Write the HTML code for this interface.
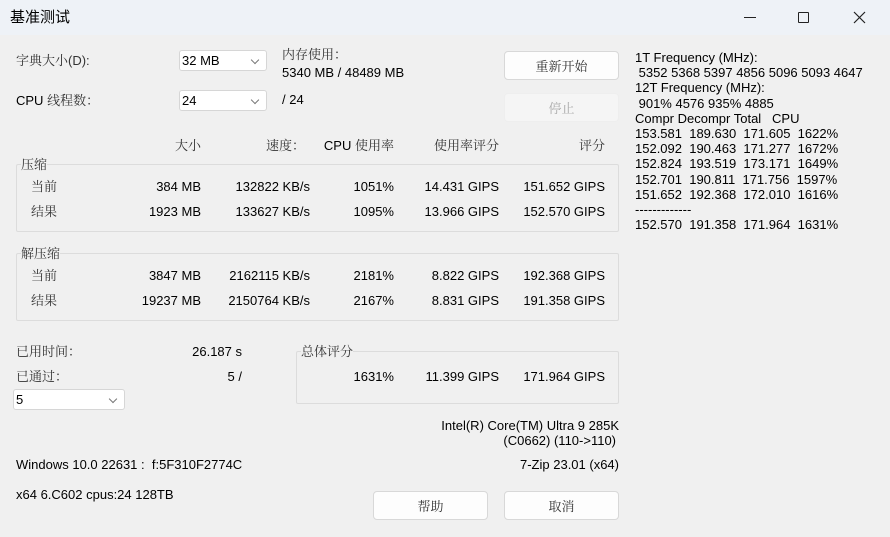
<!DOCTYPE html><html><head><meta charset="utf-8"><style>
*{margin:0;padding:0;box-sizing:border-box}
body{width:890px;height:537px;background:#f0f0f0;font-family:"Liberation Sans","Noto Sans CJK SC",sans-serif;font-size:13px;color:#000;position:relative;overflow:hidden}
.t{position:absolute;line-height:16px;white-space:nowrap}
.r{position:absolute;line-height:16px;white-space:nowrap;text-align:right}
.cj{font-family:"Noto Serif CJK SC","Noto Sans CJK SC",serif;color:#333}
.box{position:absolute;border:1px solid #dcdcdc;border-radius:2px}
.sel{position:absolute;background:#fff;border:1px solid #d6d6d6;border-radius:3px;height:21px;padding-left:2px;line-height:19px}
.sel:after{content:"";position:absolute;right:8px;top:6px;width:5px;height:5px;border-right:1px solid #777;border-bottom:1px solid #777;transform:rotate(45deg)}
.btn{position:absolute;background:#fdfdfd;border:1px solid #d8d8d8;border-radius:4px;text-align:center;font-family:"Noto Serif CJK SC",serif;color:#333}
</style></head><body>
<div style="position:absolute;left:0;top:0;width:890px;height:35px;background:#eef2f7"></div>
<div class="t" style="left:10px;top:9px;font-size:15px;font-family:'Noto Sans CJK SC',sans-serif">基准测试</div>
<div style="position:absolute;left:744px;top:17px;width:12px;height:1px;background:#222"></div>
<div style="position:absolute;left:798px;top:12px;width:11px;height:11px;border:1px solid #222;border-radius:1px"></div>
<svg style="position:absolute;left:853px;top:11px" width="13" height="13"><path d="M1 1L12 12M12 1L1 12" stroke="#222" stroke-width="1.2"/></svg>

<div class="t cj" style="left:16px;top:52px">字典大小<span style="font-family:'Liberation Sans'">(D):</span></div>
<div class="sel" style="left:179px;top:50px;width:88px">32 MB</div>
<div class="t cj" style="left:282px;top:46px">内存使用：</div>
<div class="t" style="left:282px;top:65px">5340 MB / 48489 MB</div>
<div class="t" style="left:16px;top:92px">CPU <span class="cj">线程数：</span></div>
<div class="sel" style="left:179px;top:90px;width:88px">24</div>
<div class="t" style="left:282px;top:92px">/ 24</div>
<div class="btn" style="left:504px;top:51px;width:115px;height:29px;line-height:27px">重新开始</div>
<div class="btn" style="left:504px;top:93px;width:115px;height:29px;line-height:27px;background:#f5f5f5;border-color:#eee;color:#aaa">停止</div>

<div class="r cj" style="left:100px;width:101px;top:137px">大小</div>
<div class="r cj" style="left:200px;width:105px;top:137px">速度：</div>
<div class="r" style="left:300px;width:94px;top:137px">CPU <span class="cj">使用率</span></div>
<div class="r cj" style="left:400px;width:99px;top:137px">使用率评分</div>
<div class="r cj" style="left:500px;width:105px;top:137px">评分</div>

<div class="box" style="left:16px;top:164px;width:603px;height:68px"></div>
<div class="t cj" style="left:21px;top:156px;background:#f0f0f0">压缩</div>
<div class="t cj" style="left:31px;top:178px">当前</div>
<div class="r" style="left:100px;width:101px;top:179px">384 MB</div>
<div class="r" style="left:200px;width:110px;top:179px">132822 KB/s</div>
<div class="r" style="left:300px;width:94px;top:179px">1051%</div>
<div class="r" style="left:400px;width:99px;top:179px">14.431 GIPS</div>
<div class="r" style="left:500px;width:105px;top:179px">151.652 GIPS</div>
<div class="t cj" style="left:31px;top:203px">结果</div>
<div class="r" style="left:100px;width:101px;top:204px">1923 MB</div>
<div class="r" style="left:200px;width:110px;top:204px">133627 KB/s</div>
<div class="r" style="left:300px;width:94px;top:204px">1095%</div>
<div class="r" style="left:400px;width:99px;top:204px">13.966 GIPS</div>
<div class="r" style="left:500px;width:105px;top:204px">152.570 GIPS</div>

<div class="box" style="left:16px;top:253px;width:603px;height:68px"></div>
<div class="t cj" style="left:21px;top:245px;background:#f0f0f0">解压缩</div>
<div class="t cj" style="left:31px;top:267px">当前</div>
<div class="r" style="left:100px;width:101px;top:268px">3847 MB</div>
<div class="r" style="left:200px;width:110px;top:268px">2162115 KB/s</div>
<div class="r" style="left:300px;width:94px;top:268px">2181%</div>
<div class="r" style="left:400px;width:99px;top:268px">8.822 GIPS</div>
<div class="r" style="left:500px;width:105px;top:268px">192.368 GIPS</div>
<div class="t cj" style="left:31px;top:292px">结果</div>
<div class="r" style="left:100px;width:101px;top:293px">19237 MB</div>
<div class="r" style="left:200px;width:110px;top:293px">2150764 KB/s</div>
<div class="r" style="left:300px;width:94px;top:293px">2167%</div>
<div class="r" style="left:400px;width:99px;top:293px">8.831 GIPS</div>
<div class="r" style="left:500px;width:105px;top:293px">191.358 GIPS</div>

<div class="t cj" style="left:16px;top:343px">已用时间：</div>
<div class="r" style="left:100px;width:142px;top:344px">26.187 s</div>
<div class="t cj" style="left:16px;top:368px">已通过：</div>
<div class="r" style="left:100px;width:142px;top:369px">5 /</div>
<div class="sel" style="left:13px;top:389px;width:112px">5</div>

<div class="box" style="left:296px;top:351px;width:323px;height:53px"></div>
<div class="t cj" style="left:301px;top:343px;background:#f0f0f0">总体评分</div>
<div class="r" style="left:300px;width:94px;top:369px">1631%</div>
<div class="r" style="left:400px;width:99px;top:369px">11.399 GIPS</div>
<div class="r" style="left:500px;width:105px;top:369px">171.964 GIPS</div>

<div class="r" style="left:300px;width:319px;top:418px">Intel(R) Core(TM) Ultra 9 285K</div>
<div class="r" style="left:300px;width:316px;top:433px">(C0662) (110-&gt;110)</div>
<div class="t" style="left:16px;top:457px">Windows 10.0 22631 :&nbsp; f:5F310F2774C</div>
<div class="r" style="left:300px;width:319px;top:457px">7-Zip 23.01 (x64)</div>
<div class="t" style="left:16px;top:487px">x64 6.C602 cpus:24 128TB</div>
<div class="btn" style="left:373px;top:491px;width:115px;height:29px;line-height:27px">帮助</div>
<div class="btn" style="left:504px;top:491px;width:115px;height:29px;line-height:27px">取消</div>

<div class="t" style="left:635px;top:50px;line-height:15.2px">1T Frequency (MHz):<br>&nbsp;5352 5368 5397 4856 5096 5093 4647<br>12T Frequency (MHz):<br>&nbsp;901% 4576 935% 4885<br>Compr Decompr Total&nbsp;&nbsp; CPU<br>153.581&nbsp; 189.630&nbsp; 171.605&nbsp; 1622%<br>152.092&nbsp; 190.463&nbsp; 171.277&nbsp; 1672%<br>152.824&nbsp; 193.519&nbsp; 173.171&nbsp; 1649%<br>152.701&nbsp; 190.811&nbsp; 171.756&nbsp; 1597%<br>151.652&nbsp; 192.368&nbsp; 172.010&nbsp; 1616%<br>-------------<br>152.570&nbsp; 191.358&nbsp; 171.964&nbsp; 1631%</div>
</body></html>
